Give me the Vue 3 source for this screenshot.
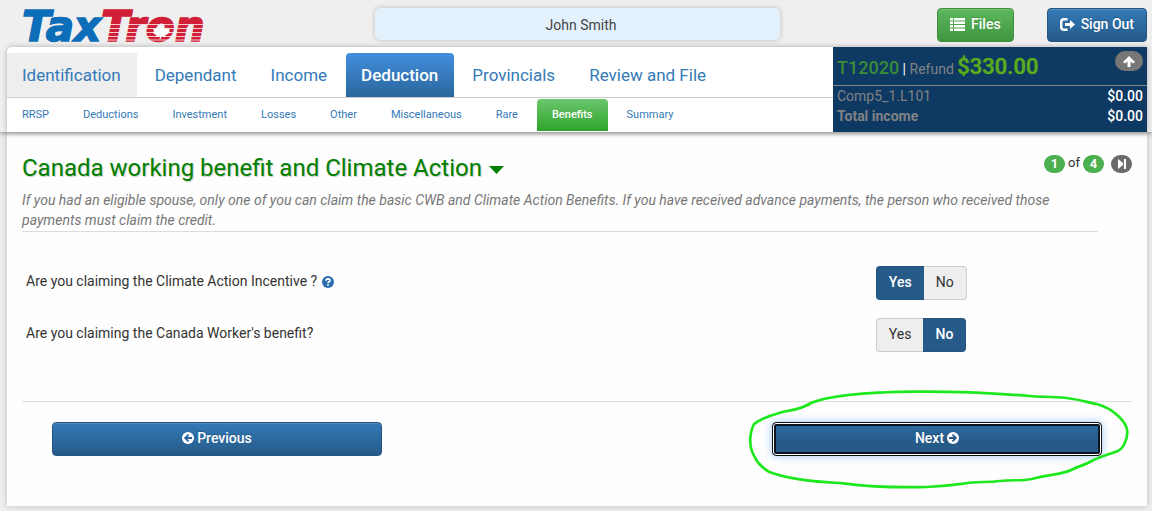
<script setup>
import { ref } from 'vue'

const mainTabs = ['Identification', 'Dependant', 'Income', 'Deduction', 'Provincials', 'Review and File']
const subTabs = ['RRSP', 'Deductions', 'Investment', 'Losses', 'Other', 'Miscellaneous', 'Rare', 'Benefits', 'Summary']

const questions = ref([
  { id: 'climate', text: 'Are you claiming the Climate Action Incentive ?', help: true, answer: 'Yes' },
  { id: 'worker', text: "Are you claiming the Canada Worker's benefit?", help: false, answer: 'No' }
])
</script>

<template>
  <div class="page">
    <header class="top">
      <div class="brand-row">
        <a class="logo" href="#" aria-label="TaxTron home">
          <svg width="200" height="54" viewBox="0 0 200 54">
            <defs>
              <pattern id="stripes" width="200" height="54" patternUnits="userSpaceOnUse">
                <rect width="200" height="54" fill="#d01f36" />
                <path d="M0 24.500H200M0 28.500H200M0 32.500H200M0 36.500H200M0 40H200" stroke="#f3c9ce" stroke-width="1" />
              </pattern>
            </defs>
            <text class="logo-text" x="0" y="41">
              <tspan fill="#0c6db8" stroke="#0c6db8">Tax</tspan><tspan fill="url(#stripes)" stroke="url(#stripes)">Tron</tspan>
            </text>
            <path fill="#fff" d="M139 23l1.500 3 2-1-1 4.500 3-2 .5 1.500 3-.5-1 2.500 1 1.500-5 3 .5 1.500-4-.5-1 3-1-.3.500-2.700-4 .5.500-1.500-4-3 1.500-1-1-3 3 .5.500-1.500 2.500 2.500-.5-5 2 1z" />
          </svg>
        </a>
        <div class="user">John Smith</div>
        <div class="actions">
          <button type="button" class="btn green">
            <svg width="15" height="13" viewBox="0 0 15 13" fill="#fff"><path d="M0 0h3v2.500H0zM4 0h11v2.500H4zM0 3.500h3V6H0zM4 3.500h11V6H4zM0 7h3v2.500H0zM4 7h11v2.500H4zM0 10.500h3V13H0zM4 10.500h11V13H4z" /></svg>
            Files
          </button>
          <button type="button" class="btn blue">
            <svg width="15" height="13" viewBox="0 0 15 13"><path d="M7.500 1.200H4Q1.200 1.200 1.200 4v5Q1.200 11.800 4 11.800H7.500" fill="none" stroke="#fff" stroke-width="2.400" /><path d="M5 5h5V2l5 4.500-5 4.500V8H5z" fill="#fff" /></svg>
            Sign Out
          </button>
        </div>
      </div>

      <div class="nav-panel">
        <div class="navs">
          <nav class="main-tabs" aria-label="Sections">
            <a v-for="tab in mainTabs" :key="tab" href="#" :class="{ active: tab === 'Deduction', visited: tab === 'Identification' }">{{ tab }}</a>
          </nav>
          <nav class="sub-tabs" aria-label="Deduction pages">
            <a v-for="tab in subTabs" :key="tab" href="#" :class="{ active: tab === 'Benefits' }">{{ tab }}</a>
          </nav>
        </div>
        <aside class="summary">
          <div class="refund">
            <div><span class="year">T12020</span> <span class="bar">|</span> <span class="label">Refund</span> <span class="amount">$330.00</span></div>
            <button type="button" class="pill up" aria-label="Collapse">
              <svg width="12" height="11" viewBox="0 0 12 11"><path d="M6 0l6 6-2 1.500-2.500-2V11h-3V5.500L2 7.500 0 6z" fill="#fff" /></svg>
            </button>
          </div>
          <dl>
            <div><dt>Comp5_1.L101</dt><dd>$0.00</dd></div>
            <div><dt class="strong">Total income</dt><dd>$0.00</dd></div>
          </dl>
        </aside>
      </div>
    </header>

    <main class="card">
      <div class="heading">
        <h1>Canada working benefit and Climate Action <svg width="16" height="8" viewBox="0 0 16 8"><path d="M1 0h15L8.500 8z" fill="#008000" /></svg></h1>
        <div class="pager">
          <span class="pill">1</span><span class="of">of</span><span class="pill">4</span>
          <button type="button" class="pill skip" aria-label="Last page">
            <svg width="10" height="10" viewBox="0 0 10 10"><path d="M1 0l5 4V0h3v10H6V6l-5 4z" fill="#fff" /><path d="M6.500 0v10" stroke="#777" stroke-width="1" /></svg>
          </button>
        </div>
      </div>
      <p class="note">If you had an eligible spouse, only one of you can claim the basic CWB and Climate Action Benefits. If you have received advance payments, the person who received those payments must claim the credit.</p>

      <div class="questions">
        <div v-for="q in questions" :key="q.id" class="question">
          <div :id="q.id" class="prompt">
            {{ q.text }}
            <svg v-if="q.help" width="12" height="12" viewBox="0 0 12 12"><circle cx="6" cy="6" r="6" fill="#2a6cad" /><path d="M4 4.800Q4 2.800 6 2.800T8 4.500Q8 5.300 7 5.800 6 6.200 6 7.200M6 8.200V9.800" fill="none" stroke="#fff" stroke-width="1.700" /></svg>
          </div>
          <div class="toggle" role="radiogroup" :aria-labelledby="q.id">
            <label v-for="option in ['Yes', 'No']" :key="option" :class="{ on: q.answer === option }">
              <input v-model="q.answer" type="radio" :name="q.id + '-answer'" :value="option">{{ option }}
            </label>
          </div>
        </div>
      </div>

      <div class="footer">
        <div class="slot">
          <button type="button" class="btn blue wide">
            <svg width="12" height="12" viewBox="0 0 12 12"><circle cx="6" cy="6" r="6" fill="#fff" /><path d="M10 6H4M6.500 2.700L3.200 6l3.300 3.300" fill="none" stroke="#2a639b" stroke-width="1.800" /></svg>
            Previous
          </button>
        </div>
        <div class="slot next">
          <button type="button" class="btn blue wide focused">
            Next
            <svg width="12" height="12" viewBox="0 0 12 12"><circle cx="6" cy="6" r="6" fill="#fff" /><path d="M2 6h6M5.500 2.700L8.800 6 5.500 9.300" fill="none" stroke="#265a88" stroke-width="1.800" /></svg>
          </button>
          <svg class="marker" viewBox="54 24 1146 306" preserveAspectRatio="none" aria-hidden="true">
            <path d="M237 72C300 42 430 36 560 35C690 34 800 40 900 48C930 52 960 48 1010 54C1060 60 1080 70 1100 72C1150 86 1192 125 1192 157C1191 180 1180 205 1165 212C1140 222 1105 232 1085 243C1060 258 1045 258 1030 267C1000 284 960 282 905 297C870 304 850 298 810 303C770 308 740 304 700 311C660 317 640 319 590 321C500 323 400 318 340 310C280 306 240 304 215 299C180 294 145 286 118 276C90 260 80 245 72 227C56 200 58 160 72 132C100 110 130 104 155 97C175 90 205 92 237 72L235 78" fill="none" stroke="#1de81d" stroke-width="8" stroke-linejoin="round" />
          </svg>
        </div>
      </div>
    </main>
  </div>
</template>

<style>
body {
  margin: 0;
  background: #efefef;
}
</style>

<style scoped>
* {
  box-sizing: border-box;
}

.page {
  font: 14px/20px Roboto, "Liberation Sans", sans-serif;
  color: #333;
  padding-bottom: 5px;
}

a {
  color: #337ab7;
  text-decoration: none;
}

button {
  font: inherit;
  cursor: pointer;
}

.top {
  position: relative;
  z-index: 1;
  padding: 0 5px 0 7px;
  background: #efefef;
  box-shadow: 0 1px 5px #777;
}

.brand-row {
  display: grid;
  grid-template-columns: 1fr 405px 1fr;
  align-items: start;
  height: 47px;
}

.logo {
  padding-left: 15px;
}

.logo svg {
  display: block;
}

.logo-text {
  font: italic bold 42px "DejaVu Sans", sans-serif;
  stroke-width: 1.5px;
}

.user {
  margin-top: 8px;
  border-radius: 5px;
  background: #e3f1fd;
  box-shadow: 0 0 5px #bbb;
  height: 32px;
  padding: 8px 0 0 8px;
  line-height: 18px;
  text-align: center;
  color: #444;
}

.actions {
  display: flex;
  justify-content: flex-end;
  gap: 33px;
  padding-top: 8px;
}

.btn {
  display: inline-flex;
  align-items: center;
  justify-content: center;
  gap: 6px;
  height: 34px;
  padding: 0 12px 2px;
  border: 1px solid;
  border-radius: 4px;
  color: #fff;
  font-weight: 500;
  text-shadow: 0 -1px 0 rgba(0, 0, 0, 0.2);
  box-shadow: inset 0 1px 0 rgba(255, 255, 255, 0.15);
}

.green {
  border-color: #3e8f3e;
  background: linear-gradient(#5cb85c, #419641);
}

.blue {
  border-color: #245580;
  background: linear-gradient(#337ab7, #265a88);
}

.nav-panel {
  display: grid;
  grid-template-columns: 1fr 314px;
  background: #fff;
  border-top-left-radius: 5px;
  box-shadow: 0 0 5px #aaa;
}

.main-tabs,
.sub-tabs {
  display: flex;
}

.main-tabs {
  height: 51px;
  padding-top: 6px;
  gap: 3px;
  border-bottom: 1px solid #ccc;
  font-size: 17px;
  line-height: 44px;
}

.main-tabs a {
  padding: 0 16px 0 15px;
}

.main-tabs .visited {
  background: #eee;
}

.main-tabs .active {
  border-radius: 4px 4px 0 0;
  background: linear-gradient(#428fdd, #2a669c);
  color: #fff;
  font-weight: 500;
}

.sub-tabs {
  gap: 4px;
  height: 34px;
  padding-top: 1px;
  font-size: 11px;
  line-height: 32px;
}

.sub-tabs a {
  height: 32px;
  padding: 0 15px;
}

.sub-tabs .active {
  border-radius: 4px 4px 0 0;
  background: linear-gradient(#6cc66c, #2da52d);
  color: #fff;
  font-weight: 500;
}

.summary {
  background: #0e3962;
  color: #808285;
}

.refund {
  display: flex;
  justify-content: space-between;
  height: 39px;
  padding: 4px 4px 0;
  border-bottom: 1px solid #81868c;
  line-height: 32px;
}

.year {
  font-size: 18px;
  font-weight: 500;
  color: #398d35;
}

.bar {
  color: #fff;
}

.amount {
  font-size: 22px;
  font-weight: 500;
  color: #58ac1e;
  text-shadow: 0 0 1px #58ac1e;
}

dl {
  margin: 0;
  padding: 0 4px;
}

dl div {
  display: flex;
  justify-content: space-between;
}

dd {
  margin: 0;
  color: #fff;
  font-weight: 500;
}

.strong {
  font-weight: 700;
}

.pill {
  display: inline-flex;
  align-items: center;
  justify-content: center;
  width: 21px;
  height: 18px;
  padding: 0;
  border: 0;
  border-radius: 10px;
  background: #4caf50;
  color: #fff;
  font-size: 13px;
  font-weight: 700;
}

.up {
  width: 28px;
  height: 20px;
  background: #777;
}

.pager .skip {
  margin-left: 7px;
  background: #6b6b6b;
}

.card {
  margin: 0 5px 0 7px;
  padding: 22px 15px 50px;
  background: #fefefe;
  box-shadow: 0 0 6px #bbb;
}

.heading {
  display: flex;
  justify-content: space-between;
}

h1 {
  margin: 0;
  font-size: 24px;
  font-weight: 400;
  line-height: 28px;
  color: #008000;
  text-shadow: 1px 1px 1px #ccc;
}

h1 svg {
  vertical-align: 2px;
}

.pager {
  display: flex;
  align-items: flex-start;
  padding-top: 1px;
  line-height: 18px;
}

.of {
  padding: 0 3px;
  font-size: 13px;
  line-height: 16px;
}

.note {
  margin: 8px 34px 0 0;
  padding-bottom: 1px;
  border-bottom: 1px solid #ddd;
  font-style: italic;
  color: #777;
}

.questions {
  display: grid;
  gap: 18px;
  padding: 34px 0 49px;
  border-bottom: 1px solid #ddd;
}

.question {
  display: grid;
  grid-template-columns: 10fr 3fr;
}

.prompt {
  padding: 5px 4px;
}

.prompt svg {
  margin-left: 1px;
  vertical-align: -2px;
}

.toggle {
  display: flex;
}

.toggle label {
  position: relative;
  height: 34px;
  padding: 5px 12px;
  border: 1px solid #ccc;
  background: #eee;
  line-height: 20px;
  cursor: pointer;
}

.toggle label:first-child {
  border-right: 0;
  border-radius: 4px 0 0 4px;
}

.toggle label:last-child {
  border-left: 0;
  border-radius: 0 4px 4px 0;
}

.toggle .on {
  border-color: #245580;
  background: #265a88;
  color: #fff;
  font-weight: 500;
}

.toggle input {
  position: absolute;
  inset: 0;
  margin: 0;
  opacity: 0;
}

.footer {
  display: grid;
  grid-template-columns: repeat(3, 1fr);
  padding: 20px 15px 0;
}

.slot {
  position: relative;
  padding: 0 15px;
}

.next {
  grid-column: 3;
}

.wide {
  width: 100%;
  gap: 3px;
}

.focused {
  border: 1px solid #101010;
  background: linear-gradient(#2d6ca2, #265a88 60%);
  box-shadow: inset 0 0 0 1px #fff, inset 0 0 0 3px #0b1420, 0 0 8px #9cc8f5;
}

.marker {
  position: absolute;
  top: -34px;
  left: -9px;
  width: calc(100% + 22px);
  height: 102px;
  pointer-events: none;
}
</style>
